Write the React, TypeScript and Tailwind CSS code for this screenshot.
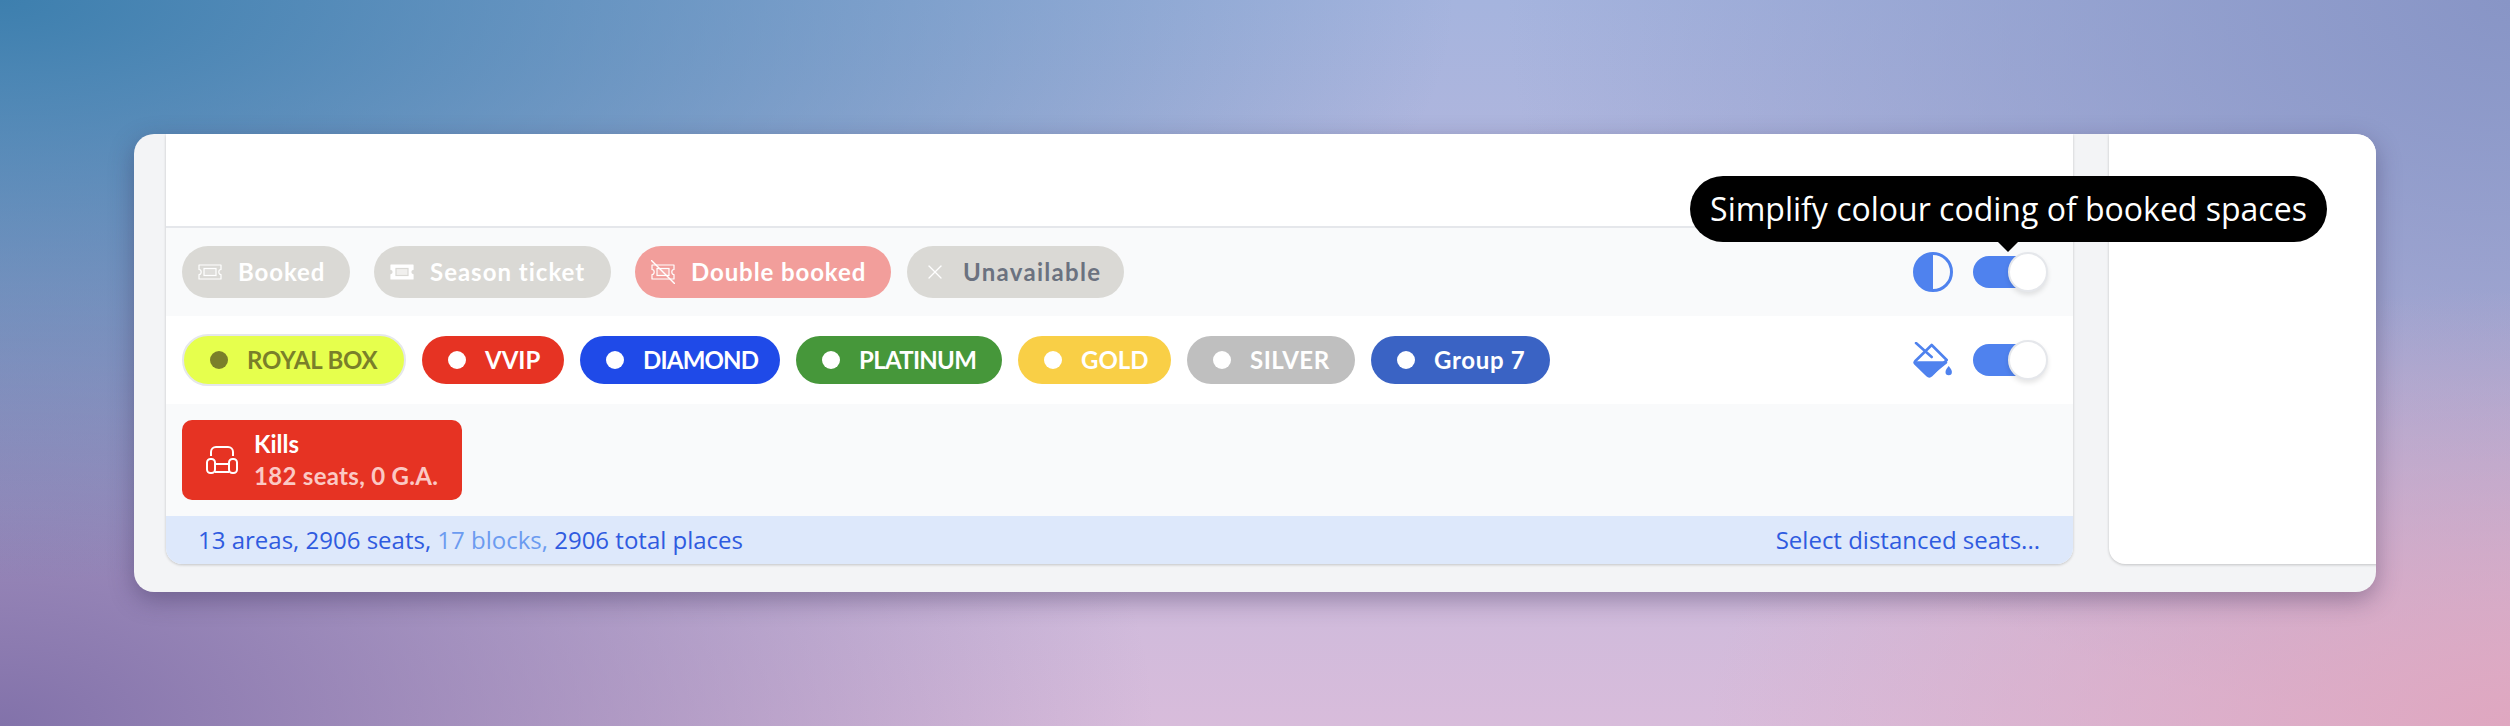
import { X } from 'lucide-react';

const chipFont = "font-['Lato',sans-serif] font-bold text-[24px] leading-none";

function Ticket({ solid = false, slash = false }: { solid?: boolean; slash?: boolean }) {
  return (
    <svg width="24" height="24" viewBox="0 0 24 24" fill="none" stroke="white" strokeWidth="1.200" className="shrink-0">
      <path
        d="M1 5h22v4.500c-1.600 0-2.200 1-2.200 2.500s.6 2.500 2.200 2.500V19H1v-4.500c1.600 0 2.200-1 2.200-2.500S2.600 9.500 1 9.500z"
        fill={solid ? 'white' : 'none'}
        strokeLinejoin="round"
      />
      <rect x="6" y="8.500" width="12" height="7" fill={solid ? '#f1f0ee' : 'rgba(255,255,255,.15)'} stroke={solid ? '#dad9d5' : 'white'} />
      {slash && <path d="M0 0L24 24" strokeWidth="1.400" />}
    </svg>
  );
}

function Dot({ className }: { className: string }) {
  return <span className={`h-[18px] w-[18px] shrink-0 rounded-full ${className}`} />;
}

function Toggle() {
  return (
    <div className="relative h-[32px] w-[75px]">
      <div className="h-[32px] w-[68px] rounded-full bg-[#4f82ee]" />
      <div className="absolute -top-[4px] right-0 h-[40px] w-[40px] rounded-full border-2 border-[#e5e7eb] bg-white shadow-[0_3px_5px_rgba(0,0,0,0.1)]" />
    </div>
  );
}

function HalfIcon() {
  return (
    <svg width="40" height="40" viewBox="0 0 40 40" className="shrink-0">
      <circle cx="20" cy="20" r="18.500" fill="none" stroke="#4f82ee" strokeWidth="3" />
      <path d="M20 1.500a18.500 18.500 0 0 0 0 37z" fill="#4f82ee" />
    </svg>
  );
}

function BucketIcon() {
  return (
    <svg width="40" height="36" viewBox="0 0 40 36" fill="none" stroke="#4f82ee" strokeWidth="2.600" strokeLinejoin="round" strokeLinecap="round" className="shrink-0">
      <path d="M18.700 3l15 15-15.300 15.300a3 3 0 0 1-4.200 0L2.400 21.800a2 2 0 0 1 0-2.800z" />
      <path d="M3 1l15.700 14" />
      <path d="M2 20.500h31L16.500 33.500z" fill="#4f82ee" />
      <path d="M35.700 24c2 2.600 3.200 4.300 3.200 6a3.200 3.200 0 0 1-6.400 0c0-1.700 1.200-3.400 3.200-6z" fill="#4f82ee" stroke="none" />
    </svg>
  );
}

function Armchair() {
  return (
    <svg width="32" height="28" viewBox="0 0 32 28" fill="none" stroke="white" strokeWidth="2" strokeLinejoin="round" className="shrink-0">
      <path d="M5 10V6a5 5 0 0 1 5-5h12a5 5 0 0 1 5 5v4" />
      <rect x="1" y="13" width="8" height="14" rx="3.500" />
      <rect x="23" y="13" width="8" height="14" rx="3.500" />
      <path d="M9 18h14M9 26h14" />
    </svg>
  );
}

const statusChips = [
  { label: 'Booked', icon: <Ticket />, cls: 'w-[168px] bg-[#dad9d5]', text: 'text-white tracking-[0.9px]' },
  { label: 'Season ticket', icon: <Ticket solid />, cls: 'w-[237px] bg-[#dad9d5]', text: 'text-white tracking-[1px]' },
  { label: 'Double booked', icon: <Ticket slash />, cls: 'w-[256px] bg-[#f29e9b]', text: 'text-white tracking-[0.9px]' },
  { label: 'Unavailable', icon: <X size={24} strokeWidth={1.300} className="shrink-0 text-white" />, cls: 'w-[217px] bg-[#dad9d5]', text: 'text-[#6b7280] tracking-[1.300px]' },
];

const groupChips = [
  { label: 'ROYAL BOX', cls: 'w-[224px] h-[52px] border-2 border-[#e5e7eb] bg-[#e6ff4d]', dot: 'bg-[#7a7f2a]', text: 'text-[#7a7f2a] tracking-[-0.2px]' },
  { label: 'VVIP', cls: 'w-[142px] h-[48px] bg-[#e63323]', dot: 'bg-white', text: 'text-white' },
  { label: 'DIAMOND', cls: 'w-[200px] h-[48px] bg-[#1f4ae8]', dot: 'bg-white', text: 'text-white tracking-[-0.8px]' },
  { label: 'PLATINUM', cls: 'w-[206px] h-[48px] bg-[#46973a]', dot: 'bg-white', text: 'text-white tracking-[-0.7px]' },
  { label: 'GOLD', cls: 'w-[153px] h-[48px] bg-[#f9cf46]', dot: 'bg-white', text: 'text-white' },
  { label: 'SILVER', cls: 'w-[168px] h-[48px] bg-[#bfbfbf]', dot: 'bg-white', text: 'text-white tracking-[0.500px]' },
  { label: 'Group 7', cls: 'w-[179px] h-[48px] bg-[#3a63c4]', dot: 'bg-white', text: 'text-white tracking-[0.700px]' },
];

export default function App() {
  return (
    <div className="relative h-[726px] w-[2510px] overflow-hidden bg-[radial-gradient(ellipse_58%_80%_at_0%_0%,#3d7fae_0%,transparent_100%),radial-gradient(ellipse_46%_90%_at_0%_100%,#8272aa_0%,transparent_100%),radial-gradient(ellipse_32%_60%_at_100%_100%,#dfa7c0_0%,transparent_100%),radial-gradient(ellipse_40%_100%_at_100%_0%,#8895c6_0%,transparent_100%),linear-gradient(180deg,#a5b4de_0%,#d8bcdb_100%)] pl-[134px] pt-[134px]">
      {/* Window */}
      <div className="flex h-[458px] w-[2242px] gap-[36px] overflow-hidden rounded-[20px] bg-[#f3f4f6] pl-[32px] shadow-[0_8px_24px_rgba(40,30,70,0.35)]">
        <div className="h-[430px] w-[1907px] shrink-0 overflow-hidden rounded-b-[16px] bg-white shadow-[0_1px_3px_rgba(0,0,0,0.2)]">
          <div className="h-[94px] border-b-2 border-[#e5e7eb]" />

          <div className="flex h-[88px] items-center bg-[#f9fafb] pl-4 pr-[25px]">
            <div className="flex items-center">
              {statusChips.map((c, i) => (
                <div key={c.label} className={`flex h-[52px] items-center gap-[16px] rounded-full pl-4 ${c.cls} ${i === 3 ? 'ml-4' : i > 0 ? 'ml-6' : ''}`}>
                  {c.icon}
                  <span className={`${chipFont} ${c.text}`}>{c.label}</span>
                </div>
              ))}
            </div>
            <div className="ml-auto flex items-center gap-5">
              <HalfIcon />
              <Toggle />
            </div>
          </div>

          <div className="flex h-[88px] items-center bg-white pl-4 pr-[25px]">
            <div className="flex items-center gap-4">
              {groupChips.map((c) => (
                <div key={c.label} className={`flex items-center gap-[19px] rounded-full pl-[26px] ${c.cls}`}>
                  <Dot className={c.dot} />
                  <span className={`${chipFont} ${c.text}`}>{c.label}</span>
                </div>
              ))}
            </div>
            <div className="ml-auto flex items-center gap-5">
              <BucketIcon />
              <Toggle />
            </div>
          </div>

          <div className="h-[112px] bg-[#f9fafb] pl-4 pt-4">
            <div className="flex h-[80px] w-[280px] items-center gap-4 rounded-[10px] bg-[#e63323] pl-6">
              <Armchair />
              <div className="font-['Lato',sans-serif] font-bold text-[24px] leading-[32px]">
                <div className="text-white">Kills</div>
                <div className="tracking-[0.300px] text-[#fbc9c4]">182 seats, 0 G.A.</div>
              </div>
            </div>
          </div>

          <div className="flex h-[48px] items-center justify-between bg-[#dde8fb] pl-[32px] pr-[33px] font-['Open_Sans',sans-serif] text-[24px] text-[#2f5be0]">
            <div>
              13 areas, 2906 seats, <span className="text-[#6b9bf0]">17 blocks,</span> 2906 total places
            </div>
            <div>Select distanced seats...</div>
          </div>
        </div>

        <div className="h-[430px] w-[300px] shrink-0 rounded-bl-[16px] bg-white shadow-[0_1px_3px_rgba(0,0,0,0.2)]" />
      </div>

      {/* Tooltip */}
      <div className="absolute left-[1690px] top-[176px] flex h-[66px] w-[637px] items-center justify-center rounded-[33px] bg-black font-['Open_Sans',sans-serif] text-[32px] text-white">
        Simplify colour coding of booked spaces
        <span className="absolute left-[308px] top-[66px] h-0 w-0 border-x-[10px] border-t-[10px] border-x-transparent border-t-black" />
      </div>
    </div>
  );
}
